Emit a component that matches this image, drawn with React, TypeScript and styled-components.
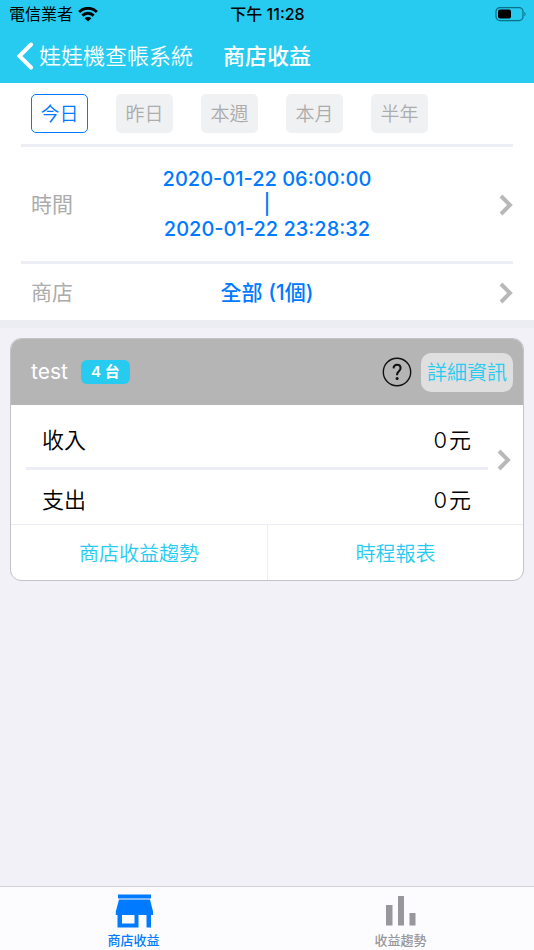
import React, { useState } from 'react';
import styled, { createGlobalStyle } from 'styled-components';

const cyan = '#26cbef';
const blue = '#007aff';
const grey = '#b5b5b5';
const line = '#ededf5';

const GlobalStyle = createGlobalStyle`
  *, *::before, *::after { box-sizing: border-box; }
  body { margin: 0; background: #f1f1f7; }
  body, button { font-family: Inter, "Noto Sans CJK TC", sans-serif; }
  button { margin: 0; padding: 0; border: 0; background: none; color: inherit; cursor: pointer; }
  a { color: inherit; text-decoration: none; }
  svg { display: block; flex: none; }
`;

const Page = styled.div`
  display: flex;
  flex-direction: column;
  min-height: 100vh;
`;

const Header = styled.header`
  background: ${cyan};
`;

const StatusBar = styled.div`
  display: grid;
  grid-template-columns: 1fr auto 1fr;
  align-items: center;
  height: 28px;
  padding: 0 8px 0 9px;
  font-size: 16px;
  line-height: 20px;
  color: #000;
`;

const Carrier = styled.span`
  display: flex;
  align-items: center;
  gap: 5px;
`;

const Clock = styled.span`
  font-weight: 500;
`;

const Battery = styled.span`
  justify-self: end;
`;

const NavBar = styled.nav`
  display: grid;
  grid-template-columns: 1fr auto 1fr;
  align-items: center;
  height: 55px;
  padding: 0 16px;
  color: #fff;
`;

const BackLink = styled.a`
  display: flex;
  align-items: center;
  gap: 6px;
  font-size: 22px;
  line-height: 32px;
  font-weight: 350;
  white-space: nowrap;
`;

const Title = styled.h1`
  margin: 0;
  font-size: 22px;
  line-height: 32px;
  font-weight: 500;
`;

const Filters = styled.section`
  padding: 0 21px;
  background: #fff;
  border-bottom: 8px solid #ecedf3;
`;

const Periods = styled.div`
  display: flex;
  gap: 28px;
  padding: 11px 10px;
`;

const PeriodButton = styled.button<{ $active: boolean }>`
  width: 57px;
  height: 39px;
  border: ${(p) => (p.$active ? `1px solid ${blue}` : '0')};
  border-radius: 5px;
  background: ${(p) => (p.$active ? '#fff' : '#f0f1f3')};
  color: ${(p) => (p.$active ? blue : '#acacac')};
  padding-top: 2px;
  font-size: 19px;
  line-height: 28px;
  font-weight: 350;
`;

const FilterRow = styled.button<{ $tall?: boolean }>`
  display: grid;
  grid-template-columns: 1fr auto 1fr;
  align-items: center;
  width: 100%;
  padding: ${(p) => (p.$tall ? '20px 0 19px' : '14px 0 12px')};
  border-top: 3px solid ${line};
  font-size: 21px;
  line-height: 30px;
  text-align: center;
`;

const FilterLabel = styled.span`
  justify-self: start;
  padding-left: 10px;
  color: #acacac;
`;

const FilterValue = styled.span`
  display: flex;
  flex-direction: column;
  color: ${blue};
  font-weight: 500;
`;

const DateLine = styled.span`
  font-size: 20px;
  line-height: 25px;
`;

const RowArrow = styled.span`
  justify-self: end;
`;

const Main = styled.main`
  flex: 1;
  padding: 10px;
`;

const Card = styled.article`
  overflow: hidden;
  border: 1px solid #c4c4c8;
  border-radius: 11px;
  background: #fff;
`;

const CardHeader = styled.header`
  display: flex;
  align-items: center;
  height: 66px;
  padding: 0 10px 0 20px;
  background: ${grey};
`;

const StoreName = styled.h2`
  margin: 0;
  color: #fff;
  font-size: 21px;
  line-height: 30px;
  font-weight: 400;
`;

const Badge = styled.span`
  margin-left: 13px;
  padding: 0 10px;
  border-radius: 6px;
  background: ${cyan};
  color: #fff;
  font-size: 15px;
  line-height: 24px;
  font-weight: 600;
`;

const HelpButton = styled.button`
  margin-left: auto;
`;

const DetailButton = styled.button`
  margin-left: 9px;
  height: 39px;
  padding: 2px 6px 0;
  border-radius: 10px;
  background: #dfdfdf;
  color: ${cyan};
  font-size: 20px;
  line-height: 28px;
  font-weight: 350;
`;

const Summary = styled.a`
  display: flex;
  align-items: center;
  padding: 0 12px 0 15px;
  gap: 9px;
`;

const SummaryArrow = styled.span`
  padding-bottom: 10px;
`;

const Amounts = styled.dl`
  flex: 1;
  margin: 0;
  color: #000;
  font-size: 22px;
  line-height: 32px;
  font-weight: 350;
`;

const AmountRow = styled.div`
  display: flex;
  justify-content: space-between;
  padding: 19px 17px 11px 16px;

  & + & {
    padding: 14px 17px 8px 16px;
    border-top: 3px solid ${line};
  }
`;

const AmountLabel = styled.dt``;

const AmountValue = styled.dd`
  display: flex;
  gap: 2px;
  margin: 0;
`;

const CardActions = styled.footer`
  display: grid;
  grid-template-columns: 1fr 1fr;
  border-top: 1px solid ${line};
`;

const CardAction = styled.a`
  padding: 15px 0 12px;
  color: ${cyan};
  font-size: 20px;
  line-height: 28px;
  font-weight: 350;
  text-align: center;

  & + & {
    border-left: 1px solid ${line};
  }
`;

const TabBar = styled.nav`
  display: grid;
  grid-template-columns: 1fr 1fr;
  border-top: 1px solid #d4d4d8;
  background: #fcfcfe;
`;

const Tab = styled.a<{ $active?: boolean }>`
  display: flex;
  flex-direction: column;
  align-items: center;
  gap: 2px;
  padding: 7px 0 1px;
  color: ${(p) => (p.$active ? blue : '#97979c')};
  font-size: 13px;
  line-height: 18px;
  font-weight: 500;
`;

const Chevron = () => (
  <svg width="14" height="22" viewBox="0 0 14 22" fill="none" stroke="#b8b8b8" strokeWidth="4" aria-hidden="true">
    <path d="M2 2 11 11 2 20" />
  </svg>
);

const BackIcon = () => (
  <svg width="17" height="28" viewBox="0 0 17 28" fill="none" stroke="#fff" strokeWidth="4" strokeLinecap="round" aria-hidden="true">
    <path d="M15 2.5 3.5 14 15 25.5" />
  </svg>
);

const WifiIcon = () => (
  <svg width="20" height="15" viewBox="0 0 20 15" aria-hidden="true">
    <g fill="none" stroke="#000" strokeWidth="3">
      <path d="M1.200 5a12.400 12.400 0 0 1 17.600 0" />
      <path d="M4.400 8.600a8 8 0 0 1 11.200 0" />
    </g>
    <path d="M10 14.600 6.600 11.300a4.900 4.900 0 0 1 6.800 0z" />
  </svg>
);

const BatteryIcon = () => (
  <svg width="32" height="15" viewBox="0 0 32 15" aria-hidden="true">
    <rect x="2" y="0.600" width="27" height="13" rx="4" fill="none" stroke="#0b6f88" strokeWidth="1.2" />
    <rect x="4" y="2.600" width="13" height="9" rx="2" />
    <path d="M30.500 4.800a3 3 0 0 1 0 4.600z" fill="#0b6f88" />
  </svg>
);

const HelpIcon = () => (
  <svg width="30" height="30" viewBox="0 0 30 30" fill="none" stroke="#111" aria-hidden="true">
    <circle cx="15" cy="15" r="13.7" strokeWidth="1.4" />
    <path d="M11.500 11.400c.2-2.400 1.600-3.600 3.600-3.600s3.500 1.300 3.500 3.300c0 1.600-.8 2.400-1.900 3.400-1.100 1-1.600 1.500-1.600 3v.8" strokeWidth="2" />
    <circle cx="15.1" cy="21.6" r="1.5" fill="#111" stroke="none" />
  </svg>
);

const StoreIcon = () => (
  <svg width="38" height="35" viewBox="0 0 38 35" fill="currentColor" aria-hidden="true">
    <path d="M3 0.500h33v4H3z" />
    <path fillRule="evenodd" d="M4 5.500h31l3 12v3.500h-2v12.500h-4.500V21h-8v12.500H2.500V21H.8v-3.500zM7 21v8.500h12.500V21z" />
  </svg>
);

const ChartIcon = () => (
  <svg width="38" height="35" viewBox="0 0 38 35" fill="currentColor" aria-hidden="true">
    <path d="M4 11h6.500v20.500H4zM16 2h6v29.500h-6zM27.500 19h6v12.500h-6z" />
  </svg>
);

const periods = ['今日', '昨日', '本週', '本月', '半年'];
const amounts = [
  { label: '收入', value: 0 },
  { label: '支出', value: 0 },
];

export default function App() {
  const [period, setPeriod] = useState('今日');

  return (
    <Page>
      <GlobalStyle />
      <Header>
        <StatusBar>
          <Carrier>
            電信業者
            <WifiIcon />
          </Carrier>
          <Clock>下午 11:28</Clock>
          <Battery>
            <BatteryIcon />
          </Battery>
        </StatusBar>
        <NavBar>
          <BackLink href="#home">
            <BackIcon />
            娃娃機查帳系統
          </BackLink>
          <Title>商店收益</Title>
        </NavBar>
      </Header>

      <Filters>
        <Periods>
          {periods.map((name) => (
            <PeriodButton
              key={name}
              type="button"
              $active={name === period}
              aria-pressed={name === period}
              onClick={() => setPeriod(name)}
            >
              {name}
            </PeriodButton>
          ))}
        </Periods>
        <FilterRow type="button" $tall>
          <FilterLabel>時間</FilterLabel>
          <FilterValue>
            <DateLine>2020-01-22 06:00:00</DateLine>
            <DateLine>|</DateLine>
            <DateLine>2020-01-22 23:28:32</DateLine>
          </FilterValue>
          <RowArrow>
            <Chevron />
          </RowArrow>
        </FilterRow>
        <FilterRow type="button">
          <FilterLabel>商店</FilterLabel>
          <FilterValue>全部 (1個)</FilterValue>
          <RowArrow>
            <Chevron />
          </RowArrow>
        </FilterRow>
      </Filters>

      <Main>
        <Card>
          <CardHeader>
            <StoreName>test</StoreName>
            <Badge>4 台</Badge>
            <HelpButton type="button" aria-label="說明">
              <HelpIcon />
            </HelpButton>
            <DetailButton type="button">詳細資訊</DetailButton>
          </CardHeader>
          <Summary href="#summary">
            <Amounts>
              {amounts.map(({ label, value }) => (
                <AmountRow key={label}>
                  <AmountLabel>{label}</AmountLabel>
                  <AmountValue>
                    <span>{value}</span>
                    <span>元</span>
                  </AmountValue>
                </AmountRow>
              ))}
            </Amounts>
            <SummaryArrow>
              <Chevron />
            </SummaryArrow>
          </Summary>
          <CardActions>
            <CardAction href="#store-trend">商店收益趨勢</CardAction>
            <CardAction href="#schedule">時程報表</CardAction>
          </CardActions>
        </Card>
      </Main>

      <TabBar>
        <Tab href="#income" $active aria-current="page">
          <StoreIcon />
          商店收益
        </Tab>
        <Tab href="#trend">
          <ChartIcon />
          收益趨勢
        </Tab>
      </TabBar>
    </Page>
  );
}
